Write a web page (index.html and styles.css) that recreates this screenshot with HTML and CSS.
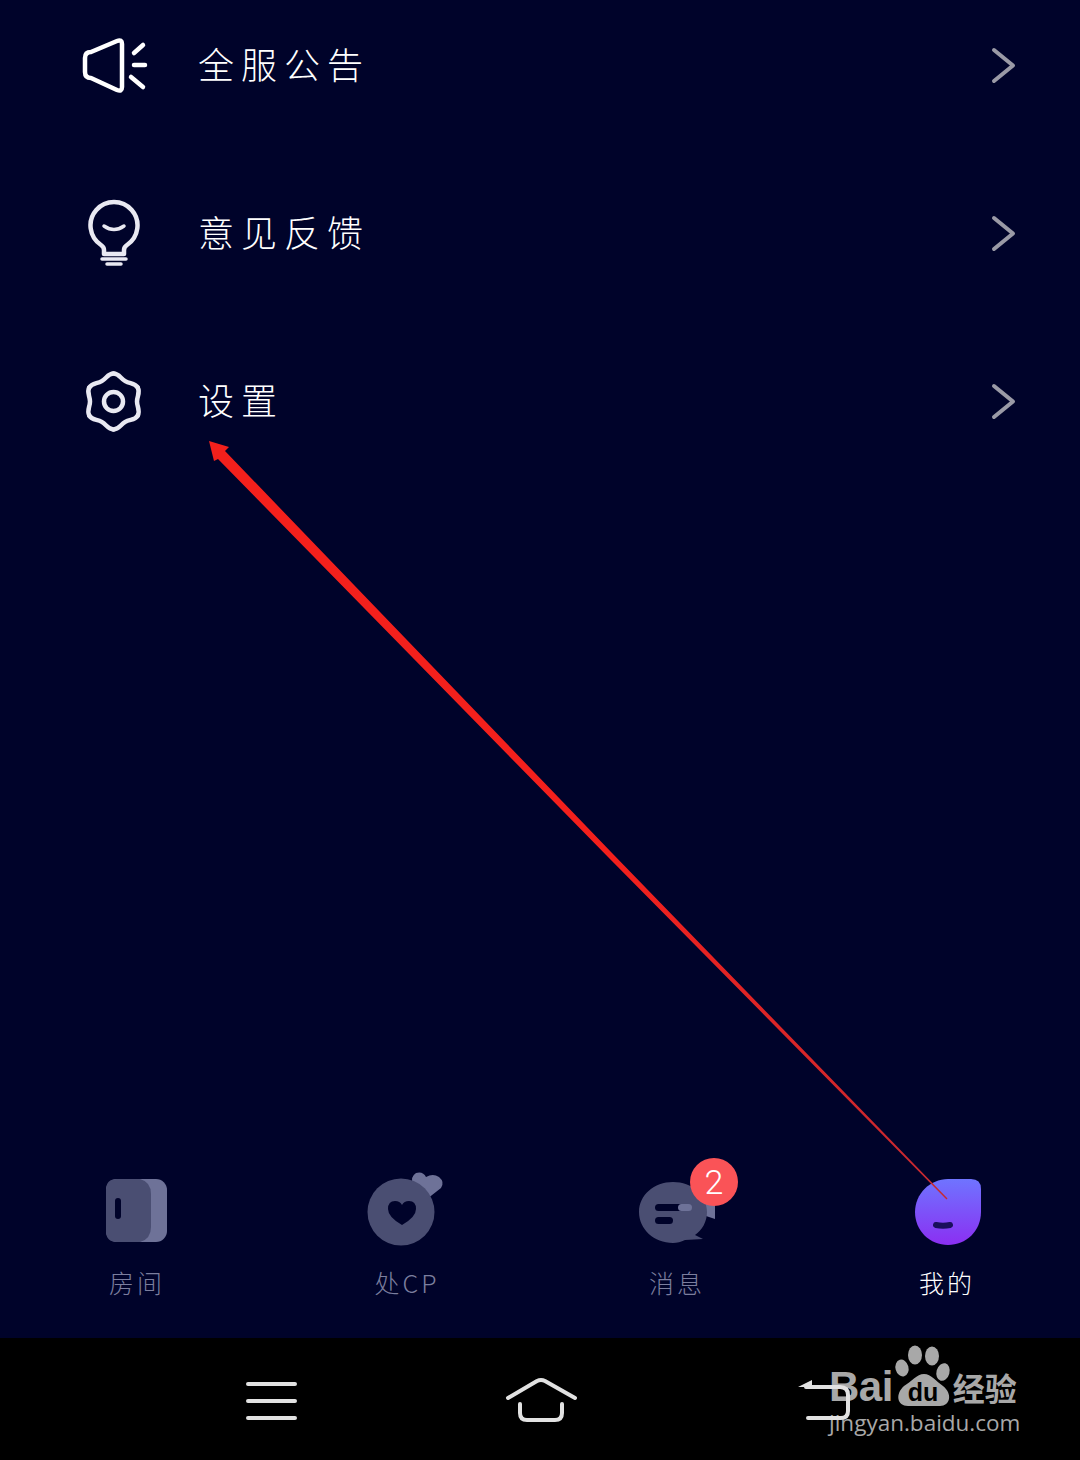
FILE: index.html
```html
<!DOCTYPE html>
<html lang="zh">
<head>
    <meta charset="utf-8">
    <title>我的</title>
    <link rel="stylesheet" href="styles.css">
</head>
<body>
<div class="page">
    <main class="content">
        <ul class="menu">
            <li class="menu-row">
                <svg class="menu-icon" viewBox="80 30 70 70">
                    <path class="line" d="M91 52 L117 41 Q122 39 122 44 L122 87 Q122 92 117 90 L91 78 Q85 78 85 72 L85 58 Q85 52 91 52 Z"/>
                    <path class="line" d="M143 45 L134 53 M134 65 L145 65 M131 77 L143 87"/>
                </svg>
                <span class="menu-text">全服公告</span>
                <svg class="chevron" viewBox="0 0 30 40"><path d="M4 5 L23 20.5 L4 36"/></svg>
            </li>
            <li class="menu-row">
                <svg class="menu-icon" viewBox="80 198 70 70">
                    <path class="line soft" d="M104 254 L104 250 Q104 247 101 245 A23.5 23.5 0 1 1 127 245 Q124 247 124 250 L124 254 Z"/>
                    <path class="line soft thin" d="M104 226 Q114 233 124 226"/>
                    <path class="line soft thin" d="M102 259 L126 259 M107 264 L121 264"/>
                </svg>
                <span class="menu-text">意见反馈</span>
                <svg class="chevron" viewBox="0 0 30 40"><path d="M4 5 L23 20.5 L4 36"/></svg>
            </li>
            <li class="menu-row">
                <svg class="menu-icon" viewBox="80 366 70 70">
                    <g transform="translate(113.5 401.5)">
                        <path id="lobe" class="line soft" d="M0 -28 C5.5 -28 6.95 -23.1 11.75 -20.35 C16.55 -17.6 21.5 -18.76 24.25 -14"/>
                        <use href="#lobe" transform="rotate(60)"/>
                        <use href="#lobe" transform="rotate(120)"/>
                        <use href="#lobe" transform="rotate(180)"/>
                        <use href="#lobe" transform="rotate(240)"/>
                        <use href="#lobe" transform="rotate(300)"/>
                        <circle class="line soft" r="9.5"/>
                    </g>
                </svg>
                <span class="menu-text">设置</span>
                <svg class="chevron" viewBox="0 0 30 40"><path d="M4 5 L23 20.5 L4 36"/></svg>
            </li>
        </ul>

        <nav class="tabbar">
            <div class="tab">
                <svg class="tab-icon" viewBox="95 1170 80 80">
                    <rect class="tab-light" x="106" y="1179" width="61" height="63" rx="11"/>
                    <path class="tab-dark" d="M117 1179 L140 1179 Q151 1182 151 1194 L151 1227 Q151 1239 140 1242 L117 1242 Q106 1242 106 1231 L106 1190 Q106 1179 117 1179 Z"/>
                    <rect class="tab-hole" x="115" y="1198" width="6" height="21" rx="3"/>
                </svg>
                <span class="tab-label">房间</span>
            </div>
            <div class="tab">
                <svg class="tab-icon" viewBox="365 1170 80 80">
                    <path class="tab-light" d="M427 1199 L413 1184 Q410 1177 416 1173 Q423 1171 426 1177 Q433 1173 439 1177 Q445 1182 441 1188 Z"/>
                    <circle class="tab-dark" cx="401" cy="1212" r="33.5"/>
                    <path class="tab-hole" d="M402 1225 Q388 1217 388 1209 Q388 1201 395 1201 Q400 1201 402 1205 Q404 1201 409 1201 Q416 1201 416 1209 Q416 1217 402 1225 Z"/>
                </svg>
                <span class="tab-label">处CP</span>
            </div>
            <div class="tab">
                <div class="tab-graphic">
                    <svg class="tab-icon" viewBox="635 1170 80 80">
                        <path class="tab-light" d="M700 1195 L720 1205 L715 1219 L706 1216 L698 1222 Z"/>
                        <path class="tab-dark" d="M673 1182 C692 1182 707 1195 707 1212 C707 1222 702 1230 695 1235 L703 1239 L685 1240 C681 1242 677 1243 673 1243 C654 1243 639 1229 639 1212 C639 1195 654 1182 673 1182 Z"/>
                        <rect class="tab-hole" x="655" y="1204" width="28" height="7" rx="3.5"/>
                        <rect class="tab-light" x="678" y="1204" width="14" height="7" rx="3.5"/>
                        <rect class="tab-hole" x="655" y="1217" width="18" height="7" rx="3.5"/>
                    </svg>
                    <span class="badge">2</span>
                </div>
                <span class="tab-label">消息</span>
            </div>
            <div class="tab tab-active">
                <svg class="tab-icon" viewBox="905 1170 80 80">
                    <defs>
                        <linearGradient id="mine" x1="0" y1="0" x2="0" y2="1">
                            <stop offset="0" stop-color="#6f74ff"/>
                            <stop offset="1" stop-color="#8b2ff2"/>
                        </linearGradient>
                    </defs>
                    <path fill="url(#mine)" d="M948 1179 L971 1179 Q981 1179 981 1189 L981 1212 C981 1231 966 1245 948 1245 C930 1245 915 1231 915 1212 C915 1194 930 1179 948 1179 Z"/>
                    <path class="mouth" d="M936 1225 Q943 1226.5 950 1225"/>
                </svg>
                <span class="tab-label">我的</span>
            </div>
        </nav>
    </main>

    <footer class="sysbar">
        <svg class="sys-icon" viewBox="231 1338 80 122">
            <path class="sys-line" d="M248 1384 L295 1384 M248 1401 L295 1401 M248 1418 L295 1418"/>
        </svg>
        <svg class="sys-icon sys-home" viewBox="501 1338 80 122">
            <path class="sys-line" d="M508 1398 L537 1381 Q541 1379 545 1381 L575 1398"/>
            <path class="sys-line" d="M520 1404 L520 1413 Q520 1420 527 1420 L555 1420 Q562 1420 562 1413 L562 1404"/>
        </svg>
        <svg class="sys-icon sys-back" viewBox="783 1338 80 122">
            <path class="sys-fill" d="M798 1387 L812 1380 L812 1387 Z"/>
            <path class="sys-line" d="M806 1387 L840 1387 Q848 1387 848 1395 L848 1411 Q848 1418 841 1418 L808 1418"/>
        </svg>
        <div class="watermark">
            <div class="wm-logo">
                <span class="wm-bai">Bai</span>
                <svg class="wm-paw" viewBox="0 0 60 62">
                    <ellipse cx="9" cy="24" rx="6.5" ry="8.5" transform="rotate(-15 9 24)"/>
                    <ellipse cx="22" cy="11" rx="7" ry="9.5"/>
                    <ellipse cx="39" cy="12" rx="7" ry="9.5"/>
                    <ellipse cx="50" cy="28" rx="6.5" ry="9" transform="rotate(15 50 28)"/>
                    <path d="M31 30 C38 30 44 38 50 42 C60 50 57 62 47 62 L15 62 C4 62 2 50 11 42 C18 38 24 30 31 30 Z"/>
                    <text class="wm-du" x="30" y="57">du</text>
                </svg>
                <span class="wm-cn">经验</span>
            </div>
            <div class="wm-url">jingyan.baidu.com</div>
        </div>
    </footer>

    <svg class="arrow" viewBox="0 0 1080 1460">
        <defs>
            <linearGradient id="arrowFade" gradientUnits="userSpaceOnUse" x1="610" y1="855" x2="947" y2="1199">
                <stop offset="0" stop-color="#f3201c"/>
                <stop offset="1" stop-color="#c42a32"/>
            </linearGradient>
        </defs>
        <path fill="url(#arrowFade)" d="M209 441 L229 447 L225 451 L612 853 L947.5 1198.5 L946.5 1199.5 L608 857 L218 459 L214 461 Z"/>
    </svg>
</div>
</body>
</html>
```

FILE: styles.css
```css
* {box-sizing: border-box;}
html, body {margin: 0; padding: 0; background: #000;}

.page {
    position: relative;
    width: 1080px;
    height: 1460px;
    display: flex;
    flex-direction: column;
    overflow: hidden;
    font-family: "Noto Sans CJK SC", "Noto Sans", sans-serif;
}

.content {
    flex: 1;
    display: flex;
    flex-direction: column;
    justify-content: space-between;
    background: #00032a;
}

/* Menu */
.menu {
    list-style: none;
    margin: 0;
    padding: 0;
    display: flex;
    flex-direction: column;
    gap: 38px;
}
.menu-row {
    height: 130px;
    display: flex;
    align-items: center;
    padding: 0 60px 0 80px;
}
.menu-icon {width: 70px; height: 70px; flex: none;}
.menu-text {
    margin-left: 48px;
    padding-bottom: 4px;
    flex: 1;
    color: #fff;
    font-size: 36px;
    font-weight: 300;
    letter-spacing: 7px;
}
.chevron {width: 30px; height: 40px; flex: none;}
.chevron path {
    fill: none;
    stroke: #9a9aa6;
    stroke-width: 4;
    stroke-linecap: round;
    stroke-linejoin: round;
}
.line {
    fill: none;
    stroke: #fff;
    stroke-width: 4.5;
    stroke-linecap: round;
    stroke-linejoin: round;
}
.soft {stroke: #e9e9f2;}
.thin {stroke-width: 3.5;}

/* Tab bar */
.tabbar {
    display: grid;
    grid-template-columns: repeat(4, 1fr);
    padding-bottom: 36px;
}
.tab {
    display: flex;
    flex-direction: column;
    align-items: center;
}
.tab-graphic {position: relative; width: 80px; height: 80px;}
.tab-icon {display: block; width: 80px; height: 80px;}
.tab-label {
    margin-top: 14px;
    padding-left: 4px;
    height: 38px;
    line-height: 36px;
    color: #7b7e9e;
    font-size: 25px;
    font-weight: 300;
    letter-spacing: 3px;
}
.tab-active .tab-label {color: #fff;}
.tab-light {fill: #6e7298;}
.tab-dark {fill: #4a4e72;}
.tab-hole {fill: #00032a;}
.mouth {
    fill: none;
    stroke: #1a0f5c;
    stroke-width: 6;
    stroke-linecap: round;
}
.badge {
    position: absolute;
    left: 55px;
    top: -12px;
    width: 48px;
    height: 48px;
    border-radius: 50%;
    background: #fa5357;
    color: #fff;
    font-family: Roboto, sans-serif;
    font-weight: 300;
    font-size: 34px;
    line-height: 48px;
    text-align: center;
}

/* System bar */
.sysbar {
    position: relative;
    height: 122px;
    flex: none;
    display: flex;
    padding-left: 231px;
    background: #000;
}
.sys-icon {display: block; position: relative; z-index: 1; width: 80px; height: 122px;}
.sys-home {margin-left: 190px;}
.sys-back {margin-left: 202px;}
.sys-line {
    fill: none;
    stroke: #e2e2e2;
    stroke-width: 4;
    stroke-linecap: round;
    stroke-linejoin: round;
}
.sys-fill {fill: #e2e2e2;}

.watermark {
    position: absolute;
    left: 829px;
    top: 6px;
    width: 195px;
    color: #a8a8a8;
}
.wm-logo {display: flex; align-items: flex-end; height: 62px;}
.wm-bai {
    font-family: "Liberation Sans", sans-serif;
    font-weight: 700;
    font-size: 42px;
    line-height: 38px;
    letter-spacing: -0.5px;
}
.wm-paw {width: 60px; height: 62px; flex: none; fill: #a8a8a8;}
.wm-du {
    fill: #000;
    font-family: "Liberation Sans", sans-serif;
    font-weight: 700;
    font-size: 25px;
    text-anchor: middle;
}
.wm-cn {
    font-size: 32px;
    font-weight: 700;
    line-height: 38px;
    white-space: nowrap;
}
.wm-url {
    margin-top: 3px;
    font-family: "Open Sans", sans-serif;
    font-size: 22.5px;
    line-height: 28px;
    white-space: nowrap;
}

/* annotation drawn over the screenshot */
.arrow {
    position: absolute;
    left: 0;
    top: 0;
    width: 1080px;
    height: 1460px;
    pointer-events: none;
}
```
